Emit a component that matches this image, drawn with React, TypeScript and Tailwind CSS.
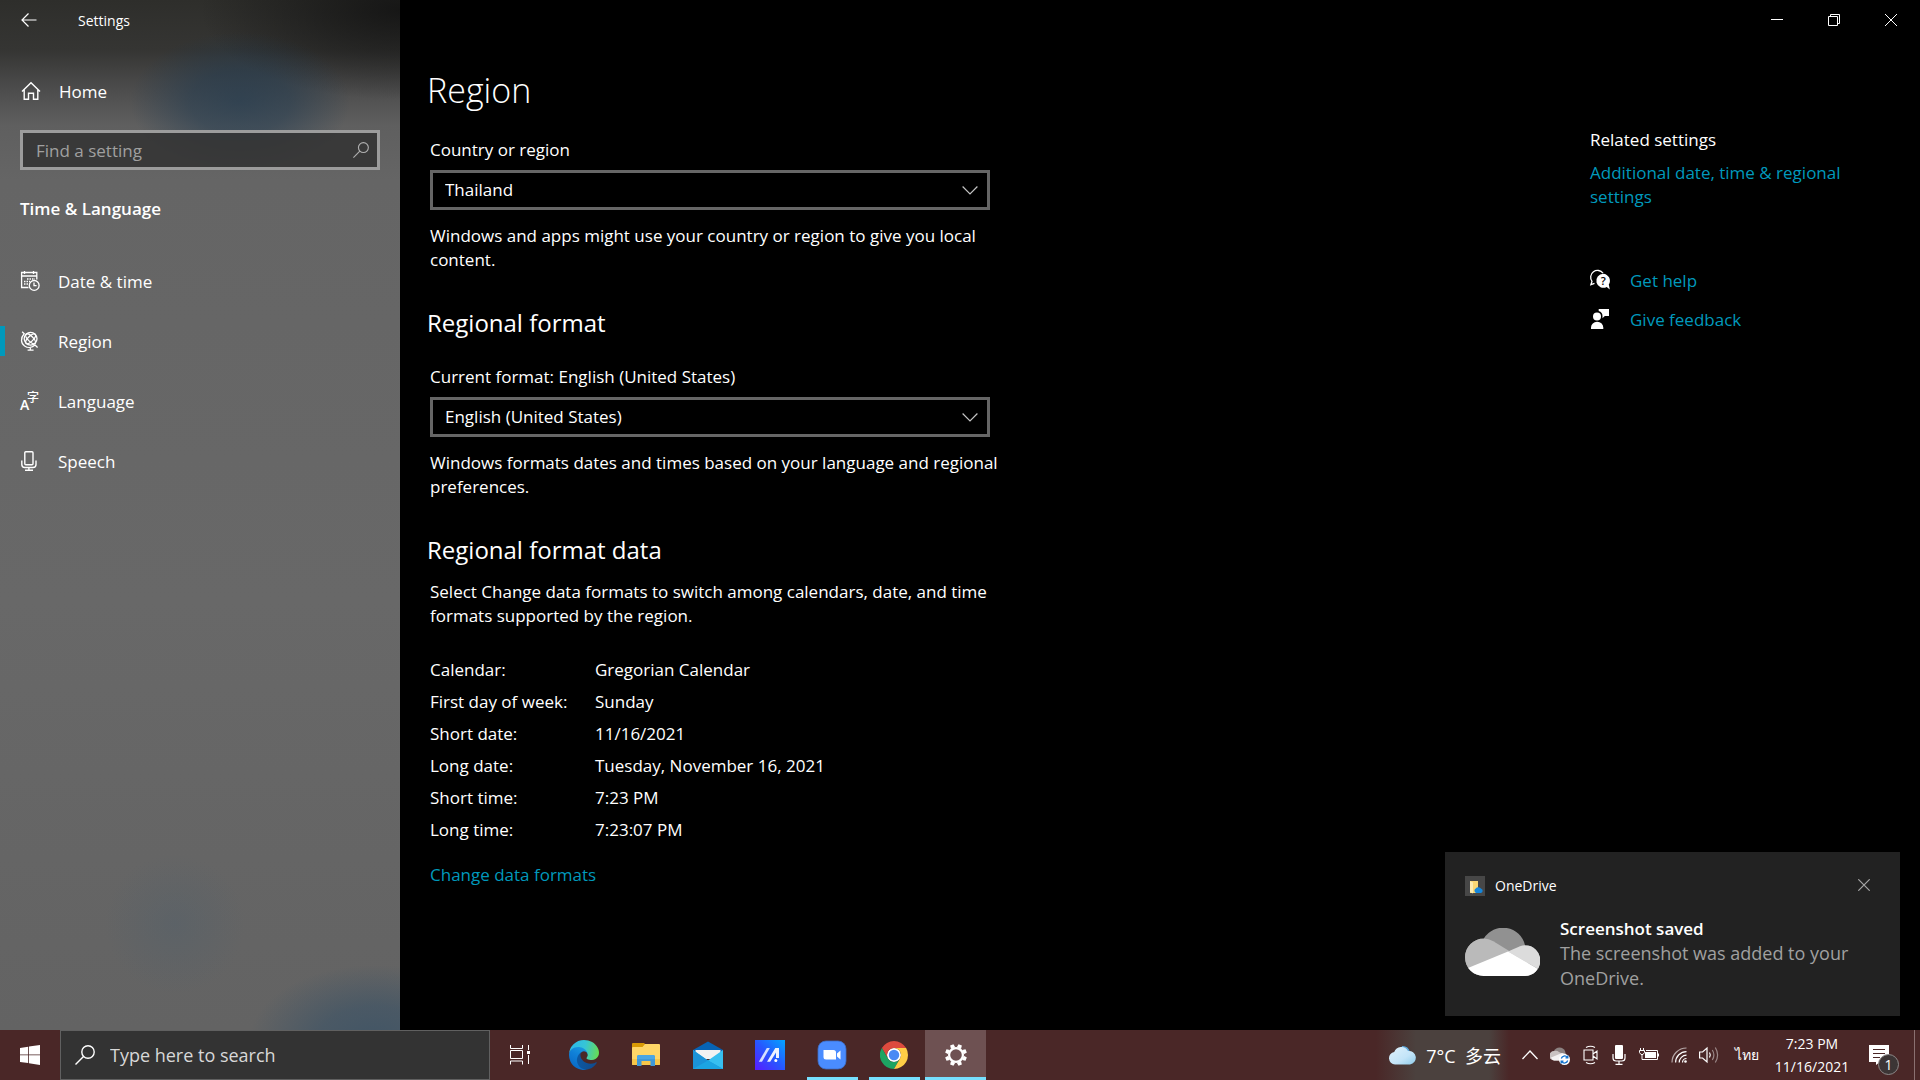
import type { ReactNode } from 'react';

// =============================================================================
// Data
// =============================================================================

const FORMAT_ROWS = [
  { label: 'Calendar:', value: 'Gregorian Calendar' },
  { label: 'First day of week:', value: 'Sunday' },
  { label: 'Short date:', value: '11/16/2021' },
  { label: 'Long date:', value: 'Tuesday, November 16, 2021' },
  { label: 'Short time:', value: '7:23 PM' },
  { label: 'Long time:', value: '7:23:07 PM' },
];

const GEAR_ANGLES = [0, 45, 90, 135, 180, 225, 270, 315];

// =============================================================================
// Settings icons
// =============================================================================

function BackIcon() {
  return (
    <svg className="w-4 h-4" viewBox="0 0 16 16" fill="none" stroke="currentColor" strokeWidth="1.2" aria-hidden="true">
      <path d="M15.5 8H1M7.5 1.5 1 8l6.5 6.5" />
    </svg>
  );
}

function HomeIcon() {
  return (
    <svg className="w-5 h-5" viewBox="0 0 20 20" fill="none" stroke="currentColor" strokeWidth="1.4" aria-hidden="true">
      <path d="M1 10.5 10 1.7l9 8.8M3.2 8.8v9.4h4.3v-6h5v6h4.3V8.8" />
    </svg>
  );
}

function SearchIcon({ className }: { className: string }) {
  return (
    <svg className={className} viewBox="0 0 20 20" fill="none" stroke="currentColor" strokeWidth="1.4" aria-hidden="true">
      <circle cx="13" cy="7" r="6.2" />
      <path d="M8.5 11.5.5 19.5" />
    </svg>
  );
}

function CalendarClockIcon() {
  return (
    <svg className="w-5 h-5" viewBox="0 0 20 20" fill="none" stroke="currentColor" strokeWidth="1.3" aria-hidden="true">
      <path d="M8.5 16.5H1.6v-15h15.2v7M1.6 5h15.2M4.5 0v3M13.5 0v3" />
      <path d="M7 8h8M4 10.5h6M4 13h4" strokeWidth="1.5" strokeDasharray="1.5 1" />
      <circle cx="14.2" cy="14.4" r="4.9" />
      <path d="M14 11.4v3.2h2.6" />
    </svg>
  );
}

function GlobeIcon() {
  return (
    <svg className="w-5 h-5" viewBox="0 0 20 20" fill="none" stroke="currentColor" strokeWidth="1.3" aria-hidden="true">
      <circle cx="10.6" cy="7.8" r="6.4" />
      <ellipse cx="10.6" cy="7.8" rx="6.4" ry="2.6" transform="rotate(45 10.6 7.8)" />
      <ellipse cx="10.6" cy="7.8" rx="2.6" ry="6.4" transform="rotate(45 10.6 7.8)" />
      <path d="M2.2.8l2 2C.3 7 .8 12.4 4.6 15c3.3 2.3 7.5 1.8 10.4-1l2.6 2.4M10.3 16v3M7.6 19.2h6" />
    </svg>
  );
}

function LanguageIcon() {
  return (
    <svg className="w-5 h-5 overflow-visible" viewBox="0 0 20 20" fill="currentColor" aria-hidden="true">
      <text x="0" y="19" fontFamily="Open Sans, sans-serif" fontSize="14" fontWeight="600">A</text>
      <text x="7" y="11" fontFamily="Noto Sans CJK SC, sans-serif" fontSize="12" fontWeight="500">字</text>
    </svg>
  );
}

function MicIcon() {
  return (
    <svg className="w-5 h-5" viewBox="0 0 20 20" fill="none" stroke="currentColor" strokeWidth="1.4" aria-hidden="true">
      <rect x="4.8" y="0.8" width="8.2" height="13" rx="1" />
      <path d="M1.8 9.5v4c0 2 1.2 3 3 3H13c1.8 0 3-1 3-3v-4M8.9 16.5v2.8M5 19.3h8" />
    </svg>
  );
}

function ChevronDown() {
  return (
    <svg className="absolute right-3 top-3 w-4 h-4 pointer-events-none" viewBox="0 0 16 16" fill="none" stroke="#c4c4c4" strokeWidth="1.2" aria-hidden="true">
      <path d="M.6 4.5 8 12l7.4-7.5" />
    </svg>
  );
}

function HelpIcon() {
  return (
    <svg className="w-5 h-5 mb-0.5 overflow-visible" viewBox="0 0 20 20" aria-hidden="true">
      <path d="M13 3.2A6.3 6.3 0 1 0 2 11.3L.9 14.6l3.6-1.2" fill="none" stroke="white" strokeWidth="1.3" />
      <path d="M13.3 3.8a7 7 0 1 0 3.4 13.1l3.1 2.7-1-5A7 7 0 0 0 13.3 3.8z" fill="white" />
      <text x="13.2" y="14.8" textAnchor="middle" fontFamily="Open Sans, sans-serif" fontSize="11" fontWeight="600" fill="black">?</text>
    </svg>
  );
}

function FeedbackIcon() {
  return (
    <svg className="w-5 h-5 mb-0.5" viewBox="0 0 20 20" fill="white" aria-hidden="true">
      <circle cx="7" cy="7.6" r="4" />
      <path d="M1 20v-1.5A6 5.8 0 0 1 7 12.8a6 5.8 0 0 1 6.3 5.7V20zM8.7 0H19v7h-4.2L12.5 9.3V7.5A5.5 5.5 0 0 0 8.7 2z" />
    </svg>
  );
}

// =============================================================================
// Taskbar icons
// =============================================================================

function WindowsIcon() {
  return (
    <svg className="w-5 h-5" viewBox="0 0 20 20" fill="white" aria-hidden="true">
      <path d="M0 2.9 8.2 1.7V9.4H0zM9 1.6 20 0v9.4H9zM0 10.3h8.2V18L0 16.9zM9 10.3h11V20L9 18.2z" />
    </svg>
  );
}

function TaskViewIcon() {
  return (
    <svg className="w-5 h-5" viewBox="0 0 20 20" fill="none" stroke="white" aria-hidden="true">
      <path d="M.5 0v3.5h12V0M.5 19.5V16h12v3.5M.5 5.5h12v8H.5zM18.5 0v5M18.5 10v9" />
      <rect x="17" y="6" width="3" height="3" fill="white" stroke="none" />
    </svg>
  );
}

function EdgeIcon() {
  return (
    <svg className="w-[30px] h-[30px]" viewBox="0 0 256 256" aria-hidden="true">
      <defs>
        <linearGradient id="edge-a" x1="60" y1="170" x2="235" y2="170" gradientUnits="userSpaceOnUse">
          <stop offset="0" stopColor="#0c59a4" />
          <stop offset="1" stopColor="#114a8b" />
        </linearGradient>
        <linearGradient id="edge-b" x1="150" y1="60" x2="50" y2="230" gradientUnits="userSpaceOnUse">
          <stop offset="0" stopColor="#1b9de2" />
          <stop offset="0.5" stopColor="#1080d8" />
          <stop offset="1" stopColor="#0a6cc8" />
        </linearGradient>
        <linearGradient id="edge-c" x1="10" y1="60" x2="250" y2="110" gradientUnits="userSpaceOnUse">
          <stop offset="0" stopColor="#2cb8e8" />
          <stop offset="0.5" stopColor="#36c5d6" />
          <stop offset="1" stopColor="#66dd55" />
        </linearGradient>
      </defs>
      <path fill="url(#edge-a)" d="M231 190.5c-3.4 1.8-6.9 3.4-10.5 4.7a101.5 101.5 0 0 1-35.6 6.4c-46.9 0-87.7-32.2-87.7-73.6.1-11.3 6.4-21.7 16.2-27.3-42.4 1.8-53.3 46-53.3 71.8 0 73.2 67.4 80.6 81.9 80.6 7.8 0 19.6-2.3 26.7-4.6l1.3-.4a128.3 128.3 0 0 0 66.4-52.8 4 4 0 0 0-5.4-5.6z" />
      <path fill="url(#edge-b)" d="M105.7 241.4a79.2 79.2 0 0 1-22.7-21.3 80.7 80.7 0 0 1 29.5-120c3.2-1.5 8.5-4.1 15.6-4a32.4 32.4 0 0 1 25.7 13 31.9 31.9 0 0 1 6.3 18.7c0-.2 24.5-79.6-80-79.6-43.9 0-80 41.7-80 78.2a130.2 130.2 0 0 0 12.1 56 128 128 0 0 0 156.4 67 75.5 75.5 0 0 1-62.8-8z" />
      <path fill="url(#edge-c)" d="M152.3 148.9c-.9 1-3.4 2.5-3.4 5.6 0 2.6 1.7 5.2 4.8 7.3 14.3 10 41.4 8.6 41.5 8.6 10.7 0 21.1-2.9 30.3-8.3a61.4 61.4 0 0 0 30.4-52.9c.3-22.4-8-37.3-11.3-43.9C223.5 23.9 177.7 0 128 0A128 128 0 0 0 0 126.2c.5-36.5 36.8-66 80-66 3.5 0 23.5.3 42 10a72.6 72.6 0 0 1 30.9 29.3c6.1 10.6 7.2 24.1 7.2 29.5s-2.7 13.3-7.8 19.9z" />
    </svg>
  );
}

function ExplorerIcon() {
  return (
    <svg className="w-[30px] h-[30px]" viewBox="0 0 30 30" aria-hidden="true">
      <path d="M1 4q0-1 1-1h11l2 2v5H1z" fill="#d99a05" />
      <path d="M1 8q0-1 1-1h9.5L14 4h14q1 0 1 1v19q0 1-1 1H2q-1 0-1-1z" fill="#ffd667" />
      <path d="M1 19h28v5q0 1-1 1H2q-1 0-1-1z" fill="#f7c64a" />
      <path d="M6 26V17q0-2 2-2h14q2 0 2 2v9h-4.5v-5h-9v5z" fill="#3f98d8" />
      <path d="M6 19v-2q0-2 2-2h14q2 0 2 2v2z" fill="#4ba6e4" />
    </svg>
  );
}

function MailIcon() {
  return (
    <svg className="w-[30px] h-[30px]" viewBox="0 0 30 30" aria-hidden="true">
      <path d="M0 10 15 1.5 30 10v8H0z" fill="#0763b5" />
      <path d="M2.5 10h25v9h-25z" fill="#f2f2f2" />
      <path d="M0 10l15 10.5L30 10v19H0z" fill="#37bff0" />
      <path d="M0 29V10l15 10.5L30 29z" fill="#1b93d8" />
      <path d="M0 29 15 20.5 30 29z" fill="#1ca4e2" />
    </svg>
  );
}

function MyAsusIcon() {
  return (
    <svg className="w-[30px] h-[30px]" viewBox="0 0 30 30" aria-hidden="true">
      <defs>
        <linearGradient id="asus" x1="0" y1="1" x2="1" y2="0">
          <stop offset="0" stopColor="#5a1bff" />
          <stop offset="0.5" stopColor="#2757ff" />
          <stop offset="1" stopColor="#02a6ff" />
        </linearGradient>
      </defs>
      <rect width="30" height="30" fill="url(#asus)" />
      <path d="M11.8 8h3L7 21.8H3.8z" fill="#d5e0ff" />
      <path d="M20.3 8H24v10h-3v-5.500l-5.800 9.300H12z" fill="#eef3ff" />
      <circle cx="20.8" cy="20.5" r="1.5" fill="white" />
    </svg>
  );
}

function ZoomIcon() {
  return (
    <svg className="w-[30px] h-[30px]" viewBox="0 0 30 30" aria-hidden="true">
      <rect x="1" y="1" width="28" height="28" rx="8" fill="#4a8cff" stroke="#3c6dc4" strokeWidth="0.8" />
      <path d="M6.5 10h10q2.5 0 2.5 2.5v7H9q-2.5 0-2.5-2.5zM20 13.5l3.500-3v9l-3.500-3z" fill="white" />
    </svg>
  );
}

function ChromeIcon() {
  return (
    <svg className="w-7 h-7" viewBox="0 0 48 48" aria-hidden="true">
      <circle cx="24" cy="24" r="12" fill="white" />
      <path fill="#dc4a3e" d="M24 12h20.78a24 24 0 0 0-41.56 0L13.6 30A12 12 0 0 1 24 12z" />
      <path fill="#1da462" d="M13.6 30 3.21 12A24 24 0 0 0 24 48l10.4-18a12 12 0 0 1-20.8 0z" />
      <path fill="#ffcd46" d="M34.4 30 24 48a24 24 0 0 0 20.78-36H24a12 12 0 0 1 10.4 18z" />
      <circle cx="24" cy="24" r="9" fill="#4a8af4" />
    </svg>
  );
}

function GearIcon() {
  return (
    <svg className="w-6 h-6" viewBox="-12 -12 24 24" fill="none" stroke="white" aria-hidden="true">
      <circle r="6.9" strokeWidth="2.2" />
      {GEAR_ANGLES.map(angle => (
        <path key={angle} d="M-2.3-7.5-1.8-11H1.8L2.3-7.5z" fill="white" stroke="none" transform={`rotate(${angle + 22.5})`} />
      ))}
    </svg>
  );
}

function WeatherIcon() {
  return (
    <svg className="w-7 h-5" viewBox="0 0 28 20" aria-hidden="true">
      <defs>
        <linearGradient id="weather" x1="0" y1="0" x2="1" y2="1">
          <stop offset="0" stopColor="#dff1fc" />
          <stop offset="0.6" stopColor="#c3e4f8" />
          <stop offset="1" stopColor="#8ecbea" />
        </linearGradient>
      </defs>
      <path d="M14 1a8 8 0 0 1 8 6 6.5 6.5 0 0 1-1 12H10z" fill="#5fa9dc" />
      <path d="M7 19.5A6.3 6.3 0 0 1 6.2 7 7.6 7.6 0 0 1 20 6a6.8 6.8 0 0 1 2 13.500z" fill="url(#weather)" />
    </svg>
  );
}

function SyncCloudIcon() {
  return (
    <svg className="w-5 h-5" viewBox="0 0 20 20" aria-hidden="true">
      <path d="M4 6a6 6 0 0 1 11 0l1 4-8 1z" fill="#8c8281" />
      <path d="M4 15.5A4.5 4.5 0 0 1 4 6a5 5 0 0 1 5 1l6 3-3 5.5z" fill="#c9c2c1" />
      <path d="M1 12.5 12 8l4 1-3 6.5H4a4 4 0 0 1-3-3z" fill="#f4f2f2" />
      <circle cx="14.5" cy="14.5" r="5.5" fill="white" />
      <path d="M11.3 13.5a3.4 3.4 0 0 1 6-1.200M17.7 15.5a3.4 3.4 0 0 1-6 1.200M17.8 10.5v2.300h-2.300M11.2 18.5v-2.300h2.300" fill="none" stroke="#1273cf" strokeWidth="1.3" />
    </svg>
  );
}

function MeetNowIcon() {
  return (
    <svg className="w-4 h-5" viewBox="0 0 16 20" fill="none" stroke="white" strokeWidth="1.1" aria-hidden="true">
      <path d="M3 2.5q4.5-2.5 9 0M3 17.5q4.5 2.5 9 0M1 5h9v10H1zM10 9l4-3v8l-4-3" />
    </svg>
  );
}

function TrayMicIcon() {
  return (
    <svg className="w-4 h-5" viewBox="0 0 16 20" fill="none" stroke="white" strokeWidth="1.2" aria-hidden="true">
      <rect x="4" y="0" width="8" height="14" rx="1" fill="white" stroke="none" />
      <path d="M2 9v4q0 3 3 3h6q3 0 3-3V9M8 16v3.4M4.5 19.4h7" />
    </svg>
  );
}

function BatteryIcon() {
  return (
    <svg className="w-5 h-4" viewBox="0 0 20 16" fill="none" stroke="white" aria-hidden="true">
      <path d="M1.5 1v2M4.5 1v2M.5 3.5h5v2l-1.5 2H2L.5 5.5zM3 7.5v5M3 12.5h15.5v-9H7M19.5 6.5v3" />
      <rect x="6" y="5" width="11" height="6" fill="white" stroke="none" />
    </svg>
  );
}

function WifiIcon() {
  return (
    <svg className="w-4 h-4" viewBox="0 0 16 16" fill="none" stroke="white" strokeWidth="1.2" aria-hidden="true">
      <path d="M1 15.5A14.5 14.5 0 0 1 15.5 1" opacity="0.6" />
      <path d="M4.6 15.5A10.9 10.9 0 0 1 15.5 4.6M8.2 15.5a7.3 7.3 0 0 1 7.3-7.3M11.5 15.5a4 4 0 0 1 4-4" />
      <circle cx="14.5" cy="14.5" r="1.3" fill="white" stroke="none" />
    </svg>
  );
}

function VolumeIcon() {
  return (
    <svg className="w-5 h-5" viewBox="0 0 20 20" fill="none" stroke="white" strokeWidth="1.2" aria-hidden="true">
      <path d="M.6 7h3L8 3v14l-4.4-4h-3zM10.5 7.5q1.6 2.500 0 5" />
      <path d="M13.3 5q3.2 5 0 10M16.3 2.5q4.6 7.500 0 15" opacity="0.45" />
    </svg>
  );
}

// =============================================================================
// Building blocks
// =============================================================================

interface NavItemProps {
  icon: ReactNode;
  label: string;
  active?: boolean;
}

function NavItem({ icon, label, active }: NavItemProps) {
  return (
    <a href="#" className="flex items-center h-[60px]" aria-current={active ? 'page' : undefined}>
      <span className={active ? 'w-[5px] h-[30px] bg-[#0099bc] mr-[15px]' : 'w-[5px] mr-[15px]'} />
      {icon}
      <span className="ml-[18px] pt-0.5">{label}</span>
    </a>
  );
}

interface SelectFieldProps {
  id: string;
  label: string;
  value: string;
  hint: string;
}

function SelectField({ id, label, value, hint }: SelectFieldProps) {
  return (
    <div>
      <label htmlFor={id} className="block leading-6">{label}</label>
      <div className="relative mt-2 max-w-[560px]">
        <select
          id={id}
          defaultValue={value}
          className="block w-full h-10 appearance-none bg-black border-3 border-[#666666] pl-3 pr-10"
        >
          <option>{value}</option>
        </select>
        <ChevronDown />
      </div>
      <p className="mt-[14px] leading-6">{hint}</p>
    </div>
  );
}

interface TaskButtonProps {
  label: string;
  children: ReactNode;
  running?: boolean;
}

function TaskButton({ label, children, running }: TaskButtonProps) {
  return (
    <button aria-label={label} className="w-[62px] flex flex-col items-center">
      <span className="flex-1 flex items-center pt-[3px]">{children}</span>
      <span className={running ? 'h-[3px] w-[51px] bg-[#76e0ff]' : 'h-[3px]'} />
    </button>
  );
}

// =============================================================================
// Panels
// =============================================================================

function Sidebar() {
  return (
    <aside className="w-[400px] shrink-0 bg-[radial-gradient(ellipse_110px_70px_at_240px_102px,#1c385099,#1c385077_45%,transparent),radial-gradient(ellipse_125px_75px_at_375px_1040px,#3a5266cc,#3a526699_45%,transparent),radial-gradient(circle_70px_at_175px_924px,#53606a77,transparent),radial-gradient(ellipse_200px_90px_at_400px_10px,#101010cc,transparent),linear-gradient(to_bottom,#2e2e2b_0px,#353533_50px,#4a4a4a_85px,#5f5f5f_125px,#656565_180px,#686868_600px,#636363_1030px)]">
      <div className="flex items-center h-10 pl-[21px]">
        <button aria-label="Back"><BackIcon /></button>
        <span className="ml-[41px] pt-0.5 text-sm">Settings</span>
      </div>
      <a href="#" className="flex items-center h-[60px] mt-[21px] pl-[21px]">
        <HomeIcon />
        <span className="ml-[18px] pt-0.5">Home</span>
      </a>
      <div className="mx-5 mt-[9px] flex items-center h-10 border-3 border-[#9c9c9c] bg-[#333333e0] pl-[13px] pr-2">
        <input
          type="text"
          aria-label="Find a setting"
          placeholder="Find a setting"
          className="flex-1 min-w-0 pt-0.5 bg-transparent outline-none placeholder:text-[#a0a0a0]"
        />
        <SearchIcon className="w-4 h-4 text-[#b0b0b0]" />
      </div>
      <h2 className="mt-[27px] ml-5 leading-6 font-semibold">Time &amp; Language</h2>
      <nav className="mt-[30px]">
        <NavItem icon={<CalendarClockIcon />} label="Date & time" />
        <NavItem icon={<GlobeIcon />} label="Region" active />
        <NavItem icon={<LanguageIcon />} label="Language" />
        <NavItem icon={<MicIcon />} label="Speech" />
      </nav>
    </aside>
  );
}

function RegionPanel() {
  return (
    <section className="w-[576px] pt-5">
      <h1 className="text-[34px] leading-[60px] font-light">Region</h1>
      <div className="mt-[18px] pl-[3px]">
        <SelectField
          id="country"
          label="Country or region"
          value="Thailand"
          hint="Windows and apps might use your country or region to give you local content."
        />
      </div>
      <h2 className="mt-[35px] text-2xl leading-[32px]">Regional format</h2>
      <div className="mt-[26px] pl-[3px]">
        <SelectField
          id="format"
          label="Current format: English (United States)"
          value="English (United States)"
          hint="Windows formats dates and times based on your language and regional preferences."
        />
      </div>
      <h2 className="mt-[35px] text-2xl leading-[32px]">Regional format data</h2>
      <div className="mt-[14px] pl-[3px]">
        <p className="leading-6">
          Select Change data formats to switch among calendars, date, and time formats supported by the region.
        </p>
        <table className="mt-[26px]">
          <tbody>
            {FORMAT_ROWS.map(row => (
              <tr key={row.label} className="h-8">
                <th scope="row" className="w-[165px] p-0 text-left font-normal">{row.label}</th>
                <td className="p-0">{row.value}</td>
              </tr>
            ))}
          </tbody>
        </table>
        <a href="#" className="inline-block mt-[17px] leading-6 text-[#0099bc]">Change data formats</a>
      </div>
    </section>
  );
}

function RelatedPanel() {
  return (
    <aside className="w-[290px] mr-10 pt-[88px]">
      <h2 className="leading-6">Related settings</h2>
      <a href="#" className="block mt-[9px] leading-6 text-[#0099bc]">Additional date, time &amp; regional settings</a>
      <div className="mt-[52px] flex items-center gap-5 h-[39px]">
        <HelpIcon />
        <a href="#" className="text-[#0099bc]">Get help</a>
      </div>
      <div className="flex items-center gap-5 h-[39px]">
        <FeedbackIcon />
        <a href="#" className="text-[#0099bc]">Give feedback</a>
      </div>
    </aside>
  );
}

function WindowControls() {
  return (
    <div className="flex justify-end h-10 pr-px">
      <button aria-label="Minimize" className="w-[57px] flex items-center justify-center">
        <svg className="w-3 h-3" viewBox="0 0 12 12" stroke="white"><path d="M0 5.5h12" /></svg>
      </button>
      <button aria-label="Restore" className="w-[57px] flex items-center justify-center">
        <svg className="w-3 h-3" viewBox="0 0 12 12" fill="none" stroke="white"><path d="M.5 2.5h9v9h-9zM2.5 2.5v-2h9v9h-2" /></svg>
      </button>
      <button aria-label="Close" className="w-[57px] flex items-center justify-center">
        <svg className="w-3 h-3" viewBox="0 0 12 12" stroke="white"><path d="m0 0 12 12M12 0 0 12" /></svg>
      </button>
    </div>
  );
}

function Toast() {
  return (
    <div role="status" className="absolute right-5 bottom-[64px] w-[455px] h-[164px] bg-[#222222] px-5 pt-6">
      <div className="flex items-center h-5 text-sm">
        <svg className="w-5 h-5" viewBox="0 0 20 20" aria-hidden="true">
          <rect width="20" height="20" fill="#474747" />
          <path d="M5 5h8v12H5z" fill="#f9d775" />
          <path d="M5 5l3 1.5V17.5L5 16z" fill="#fcebb3" />
          <path d="M11 17a2.5 2.5 0 0 1-.3-4.5 3.5 3.5 0 0 1 5.5.3A2.2 2.2 0 0 1 16 17z" fill="#1486dc" />
        </svg>
        <span className="ml-[10px]">OneDrive</span>
        <button aria-label="Dismiss" className="ml-auto mr-[10px] pb-0.5">
          <svg className="w-3 h-3" viewBox="0 0 12 12" stroke="#a6a6a6" strokeWidth="1.2"><path d="M.3.3l11.4 11.4M11.7.3.3 11.7" /></svg>
        </button>
      </div>
      <div className="flex mt-5">
        <svg className="mt-3 w-[75px] h-12 shrink-0" viewBox="0 0 75 48" aria-hidden="true">
          <defs>
            <clipPath id="cloud">
              <path d="M18.7 48A18.7 18.7 0 0 1 18.8 10.5 22.5 22.5 0 0 1 60 17.3 15.3 15.3 0 0 1 60 48z" />
            </clipPath>
          </defs>
          <g clipPath="url(#cloud)">
            <path d="M0 0h75v48H0z" fill="#919191" />
            <path d="M0 48V10.5h18.800q5 0 9.500 2.700l36 22z" fill="#bababa" />
            <path d="M43 23.5 55 18.200q2.500-1 5-1h15V42z" fill="#dcdcdc" />
            <path d="M3 40 43 23.5 73 41v7H0z" fill="white" />
          </g>
        </svg>
        <div className="ml-5 leading-[25px]">
          <p className="font-semibold">Screenshot saved</p>
          <p className="text-lg leading-[25px] text-[#a0a0a0]">The screenshot was added to your OneDrive.</p>
        </div>
      </div>
    </div>
  );
}

function Taskbar() {
  return (
    <footer className="flex h-[50px] shrink-0 bg-[#4a2727]">
      <button aria-label="Start" className="w-[60px] flex items-center justify-center"><WindowsIcon /></button>
      <div className="w-[430px] flex items-center bg-[#333333] border border-[#606060] pl-[14px]">
        <SearchIcon className="w-5 h-5" />
        <input
          type="text"
          aria-label="Type here to search"
          placeholder="Type here to search"
          className="ml-[15px] flex-1 min-w-0 bg-transparent text-lg outline-none placeholder:text-[#d8d8d8]"
        />
      </div>
      <button aria-label="Task view" className="w-[60px] flex items-center justify-center"><TaskViewIcon /></button>
      <div className="flex ml-[3px]">
        <TaskButton label="Microsoft Edge"><EdgeIcon /></TaskButton>
        <TaskButton label="File Explorer"><ExplorerIcon /></TaskButton>
        <TaskButton label="Mail"><MailIcon /></TaskButton>
        <TaskButton label="MyASUS"><MyAsusIcon /></TaskButton>
        <TaskButton label="Zoom" running><ZoomIcon /></TaskButton>
        <TaskButton label="Google Chrome" running><ChromeIcon /></TaskButton>
        <button aria-label="Settings" className="w-[61px] flex items-center justify-center bg-[#6e5152] border-b-3 border-[#76e0ff] pt-[3px]">
          <GearIcon />
        </button>
      </div>

      {/* Tray */}
      <div className="ml-auto flex items-center">
        <button className="flex items-center h-full pl-3 pr-2 bg-[linear-gradient(to_right,#4a2727,#4b413e_30%,#4b413e_85%,#4a2727)]">
          <WeatherIcon />
          <span className="ml-[10px] pt-0.5 text-lg whitespace-pre">7°C  多云</span>
        </button>
        <button aria-label="Show hidden icons" className="ml-[13px]">
          <svg className="w-4 h-4" viewBox="0 0 16 16" fill="none" stroke="white" strokeWidth="1.3"><path d="M.5 12 8 4l7.5 8" /></svg>
        </button>
        <button aria-label="OneDrive" className="ml-3"><SyncCloudIcon /></button>
        <button aria-label="Meet Now" className="ml-[13px]"><MeetNowIcon /></button>
        <button aria-label="Microphone" className="ml-3"><TrayMicIcon /></button>
        <button aria-label="Battery" className="ml-3"><BatteryIcon /></button>
        <button aria-label="Network" className="ml-3"><WifiIcon /></button>
        <button aria-label="Volume" className="ml-3"><VolumeIcon /></button>
        <button className="w-10 ml-2 text-sm text-center">ไทย</button>
        <button className="w-[90px] text-sm leading-[23px] text-center">
          <span className="block">7:23 PM</span>
          <span className="block">11/16/2021</span>
        </button>
        <button aria-label="Notifications" className="relative ml-3 w-[45px] h-full">
          <svg className="absolute left-0 top-[15px] w-5 h-5" viewBox="0 0 20 20" aria-hidden="true">
            <path d="M0 0h20v17h-9l-4 3v-3H0z" fill="white" />
            <path d="M4 4.5h12M4 8.5h12M4 12.5h7" stroke="#4a2727" strokeWidth="1.2" />
          </svg>
          <span className="absolute left-[9px] top-6 w-[21px] h-[21px] rounded-full bg-[#3c3535] border border-[#8c8888] text-sm leading-[19px] text-center">1</span>
        </button>
        <div className="h-full w-[6px] border-l border-[#8a7070]" />
      </div>
    </footer>
  );
}

// =============================================================================
// App
// =============================================================================

export default function App() {
  return (
    <div className="relative flex flex-col min-h-screen bg-black text-white text-[17px] leading-6 font-['Open_Sans','Noto_Sans_CJK_SC',sans-serif]">
      <div className="flex flex-1">
        <Sidebar />
        <main className="flex-1 min-w-0">
          <WindowControls />
          <div className="flex justify-between pl-[27px]">
            <RegionPanel />
            <RelatedPanel />
          </div>
        </main>
      </div>
      <Taskbar />
      <Toast />
    </div>
  );
}
